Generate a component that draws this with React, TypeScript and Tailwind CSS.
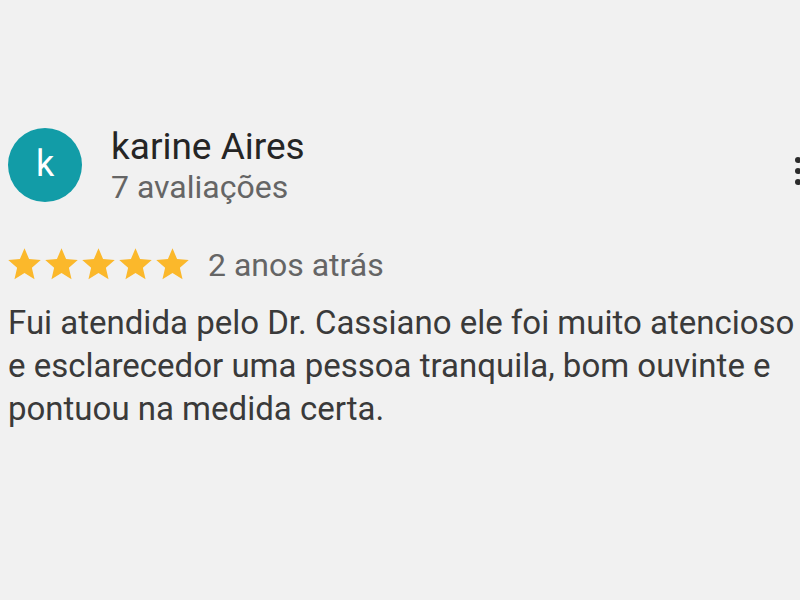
import React from 'react';

function Star() {
  return (
    <svg viewBox="0 0 24 24" className="w-[39px] h-[39px] -mx-[1px]" fill="#fbb82b">
      <path d="M12 17.27L18.18 21l-1.64-7.03L22 9.24l-7.19-.61L12 2 9.19 8.63 2 9.24l5.46 4.73L5.82 21z" />
    </svg>
  );
}

export default function App() {
  return (
    <div
      className="w-[800px] h-[600px] bg-[#f1f1f1] overflow-hidden relative"
      style={{ fontFamily: 'Roboto, "Noto Sans", sans-serif' }}
    >
      <div className="pt-[128px] pl-[8px]">
        <div className="flex items-start">
          <div className="w-[74px] h-[74px] rounded-full bg-[#129ca7] flex items-center justify-center text-white text-[36px] leading-none pb-[3px]">
            k
          </div>
          <div className="ml-[29px] -mt-[1px] flex flex-col">
            <div className="text-[37px] leading-[40px] text-[#252525]">karine Aires</div>
            <div className="text-[32px] leading-[40px] text-[#656565]">7 avaliações</div>
          </div>
        </div>

        <div className="flex items-center mt-[38px]">
          <div className="flex items-center -ml-[2px]">
            <Star />
            <Star />
            <Star />
            <Star />
            <Star />
          </div>
          <span className="ml-[17px] text-[32px] leading-none text-[#656565]">2 anos atrás</span>
        </div>

        <p className="mt-[17px] text-[33px] leading-[43px] text-[#3a3a3a] w-[792px]">
          Fui atendida pelo Dr. Cassiano ele foi muito atencioso e esclarecedor uma pessoa tranquila, bom ouvinte e pontuou na medida certa.
        </p>
      </div>

      <div className="absolute left-[795px] top-[157px] flex flex-col gap-[5px]">
        <span className="w-[6px] h-[6px] rounded-full bg-[#2b2b2b]" />
        <span className="w-[6px] h-[6px] rounded-full bg-[#2b2b2b]" />
        <span className="w-[6px] h-[6px] rounded-full bg-[#2b2b2b]" />
      </div>
    </div>
  );
}
